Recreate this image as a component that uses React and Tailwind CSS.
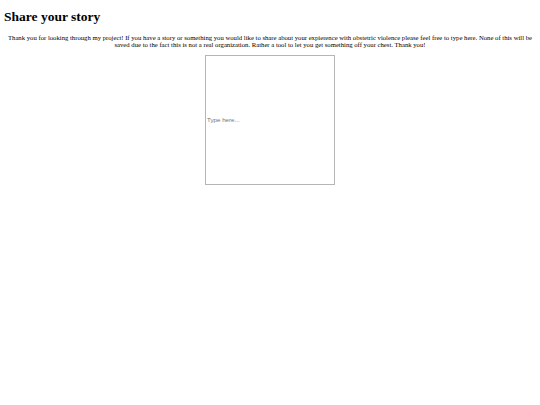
import React from "react";

export default function App() {
  return (
    <div className="min-h-[405px] bg-white px-[4px] pt-[1px] font-['Liberation_Serif',serif] text-black">
      {/* Heading */}
      <h1 className="mt-[8px] mb-[10px] text-[13.5px] font-bold leading-[15px]">
        Share your story
      </h1>

      {/* Intro text */}
      <p className="mb-[6px] text-center text-[6.7px] leading-[7.4px]">
        Thank you for looking through my project! If you have a story or
        something you would like to share about your expierence with obstetric
        violence please feel free to type here. None of this will be saved due
        to the fact this is not a real organization. Rather a tool to let you
        get something off your chest. Thank you!
      </p>

      {/* Story box */}
      <div className="flex justify-center">
        <input
          type="text"
          placeholder="Type here..."
          className="h-[130px] w-[130px] border border-[#b5b5b5] px-[1px] font-['Liberation_Sans',sans-serif] text-[6.2px] text-gray-700 placeholder:text-[#757575] outline-none"
        />
      </div>
    </div>
  );
}
